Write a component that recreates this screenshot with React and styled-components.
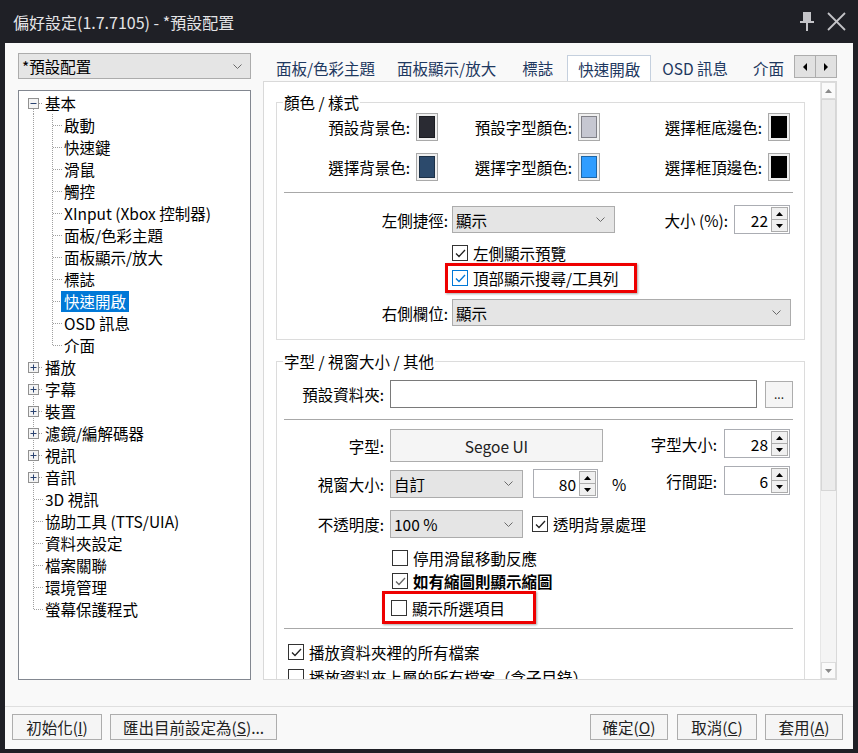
import React from 'react';
import styled, { createGlobalStyle } from 'styled-components';

const FONT = `"Noto Sans CJK TC", "Noto Sans", sans-serif`;

const GlobalStyle = createGlobalStyle`
  html, body { margin: 0; padding: 0; background: #1f2026; }
  body { font-family: ${FONT}; font-size: 15.5px; color: #000; }
  * { box-sizing: border-box; }
`;

const Window = styled.div`
  width: 858px; height: 753px; background: #1f2026;
  display: flex; flex-direction: column; overflow: hidden;
`;
const TitleBar = styled.div`
  height: 43px; flex: none; display: flex; align-items: center;
  padding: 0 12px 0 13px; color: #e4e4e6; font-size: 16px; line-height: 20px;
`;
const Title = styled.div`flex: 1;`;
const TitleIcons = styled.div`display: flex; align-items: center; gap: 12px;`;

const Client = styled.div`
  flex: 1; margin: 0 5px 4px; background: #f9f9f9;
  display: flex; flex-direction: column;
`;
const Main = styled.div`
  height: 663px; flex: none; display: flex; padding: 10px 0 26px 13px;
`;
const LeftCol = styled.div`
  width: 233px; flex: none; display: flex; flex-direction: column; gap: 11px;
`;
const Combo = styled.div`
  height: 26px; flex: none; background: #e5e5e5; border: 1px solid #acacac;
  display: flex; align-items: center; justify-content: space-between;
  padding: 0 8px 0 3px; line-height: 22px;
`;
const Tree = styled.div`
  flex: 1; background: #fff; border: 1px solid #828790; padding: 1px 0 0 4px;
  display: flex; flex-direction: column;
`;
const TreeRow = styled.div`
  height: 22px; display: flex; align-items: center; flex: none;
`;
const TreeText = styled.span`
  margin-left: -1px; padding: 0 3px; line-height: 21px; white-space: nowrap;
  background: ${p => (p.$sel ? '#0078d7' : 'transparent')};
  color: ${p => (p.$sel ? '#fff' : '#000')};
`;

const RightCol = styled.div`
  width: 574px; margin-left: 12px; flex: none; display: flex; flex-direction: column;
`;
const TabRow = styled.div`
  height: 28px; flex: none; display: flex; align-items: flex-end;
`;
const Tabs = styled.div`
  flex: 1; display: flex; align-items: flex-end; overflow: hidden; padding-left: 2px; height: 28px;
`;
const Tab = styled.div`
  height: 27px; padding: 0 10px; line-height: 26px; white-space: nowrap; flex: none;
  color: #1e3860; font-size: 15.5px;
  margin-right: ${p => p.$mr || 0}px;
  background: ${p => (p.$active ? '#fff' : 'transparent')};
  border: 1px solid ${p => (p.$active ? '#c5d0de' : 'transparent')};
  border-bottom: none;
  margin-bottom: ${p => (p.$active ? '-1px' : '0')};
  position: relative; z-index: ${p => (p.$active ? 2 : 0)};
`;
const TabArrows = styled.div`
  display: flex; flex: none; align-self: flex-start; margin-top: 2px;
`;
const ArrowBtn = styled.div`
  width: 22px; height: 23px; background: #e1e1e1; border: 1px solid #adadad;
  display: flex; align-items: center; justify-content: center;
  & + & { margin-left: -1px; }
`;
const Panel = styled.div`
  flex: 1; background: #fff; border: 1px solid #d9d9d9; display: flex; min-height: 0;
  position: relative; z-index: 1;
`;
const ScrollContent = styled.div`
  flex: 1; overflow: hidden; padding: 10px 15px 0 12px;
`;
const ScrollBar = styled.div`
  width: 16px; flex: none; background: #f4f4f4; border-left: 1px solid #e6e6e6;
  display: flex; flex-direction: column;
`;
const ScrollBtn = styled.div`
  height: 17px; flex: none; background: #fafafa; border: 1px solid #dcdcdc;
  display: flex; align-items: center; justify-content: center;
`;
const Thumb = styled.div`
  height: 392px; flex: none; background: #ececec; border: 1px solid #d6d6d6;
`;
const Track = styled.div`flex: 1;`;

const Group = styled.fieldset`
  margin: ${p => p.$mt || 0}px 0 0; padding: 0 0 13px; border: 1px solid #dcdcdc; min-width: 0;
`;
const Legend = styled.legend`
  margin-left: 6px; padding: 0 1px; line-height: 20px; font-size: 15.5px;
`;
const ColorGrid = styled.div`
  display: grid; grid-template-columns: 161px 162px 190px; row-gap: 12px; margin-top: 1px;
`;
const ColorCell = styled.div`
  display: flex; align-items: center; justify-content: flex-end; gap: 6px; line-height: 20px;
`;
const Swatch = styled.span`
  width: 22px; height: 28px; flex: none; padding: 2px; background: #f0f0f0;
  border: 1px solid #a9a9a9; display: flex;
  & > span { flex: 1; background: ${p => p.$c}; border: 1px solid rgba(0,0,0,0.35); }
`;
const Sep = styled.div`
  height: 1px; background: #a8a8a8; margin: ${p => p.$mt || 0}px 11px 0 7px;
`;
const Row = styled.div`
  display: flex; align-items: ${p => p.$top ? 'flex-start' : 'center'}; margin-top: ${p => p.$mt || 0}px;
  padding-left: ${p => p.$pl || 0}px; padding-right: ${p => p.$pr || 0}px;
  line-height: 20px;
`;
const Label = styled.span`
  flex: none; white-space: nowrap; text-align: right;
  width: ${p => (p.$w ? `${p.$w}px` : 'auto')};
`;
const Spacer = styled.div`flex: 1;`;
const Select = styled.div`
  flex: none; width: ${p => p.$w}px; height: ${p => p.$h || 27}px; margin-left: ${p => p.$ml || 0}px;
  background: #e5e5e5; border: 1px solid #acacac; display: flex; align-items: center;
  justify-content: space-between; padding: 0 9px 0 3px; white-space: nowrap;
`;
const SpinBox = styled.div`
  flex: none; width: ${p => p.$w}px; height: 29px; margin-left: ${p => p.$ml || 0}px;
  background: #fff; border: 1px solid #abadb3; display: flex;
`;
const SpinVal = styled.div`
  flex: 1; text-align: right; padding-right: 3px; display: flex; align-items: center; justify-content: flex-end;
`;
const SpinBtns = styled.div`
  width: 18px; flex: none; display: flex; flex-direction: column; padding: 1px 1px 1px 0;
`;
const SpinBtn = styled.div`
  flex: 1; background: #f0f0f0; border: 1px solid #acacac; display: flex; align-items: center; justify-content: center;
  & + & { margin-top: -1px; }
`;
const TextInput = styled.div`
  flex: none; width: ${p => p.$w}px; height: 28px; margin-left: ${p => p.$ml || 0}px;
  background: #fff; border: 1px solid #7a7a7a;
`;
const PushBtn = styled.div`
  flex: none; width: ${p => p.$w}px; height: ${p => p.$h || 26}px; margin-left: ${p => p.$ml || 0}px;
  background: #f5f5f5; border: 1px solid #adadad; display: flex; align-items: center; justify-content: center;
  color: #222; white-space: nowrap; font-size: ${p => p.$fs || 15.5}px;
`;
const CheckItem = styled.div`
  display: flex; align-items: center; gap: 5px; height: 22px; flex: none;
  margin-left: ${p => p.$ml || 0}px; margin-top: ${p => p.$mt || 0}px;
  padding-left: ${p => p.$pl || 0}px; white-space: nowrap;
  font-weight: ${p => (p.$bold ? 700 : 400)}; line-height: 20px;
`;
const Box = styled.span`
  width: 16px; height: 16px; flex: none; background: #fff;
  border: 1px solid ${p => (p.$focus ? '#0078d7' : '#333')};
  display: inline-flex; align-items: center; justify-content: center;
`;
const RedWrap = styled.div`
  width: ${p => p.$w}px; height: ${p => p.$h}px; margin-left: ${p => p.$ml}px; margin-top: -1px;
  border: 3px solid #ee0000; padding-left: ${p => p.$pl || 4}px; display: flex; align-items: center;
  box-shadow: 1px 1px 2px rgba(0,0,0,0.35);
`;
const Stack = styled.div`
  display: flex; flex-direction: column; align-items: ${p => p.$align || 'stretch'};
`;
const Percent = styled.span`margin-left: 14px;`;

const Footer = styled.div`
  flex: 1; border-top: 1px solid #dfdfdf; display: flex; align-items: flex-start;
  padding: 7px 10px 0 7px; gap: 8px;
`;

const Chevron = () => (
  <svg width="9" height="5" viewBox="0 0 9 5"><polyline points="0.5,0.5 4.5,4.5 8.5,0.5" fill="none" stroke="#6a6a6a" strokeWidth="1" /></svg>
);
const TriUp = () => (<svg width="7" height="4" viewBox="0 0 7 4"><polygon points="0,4 3.5,0 7,4" fill="#000" /></svg>);
const TriDown = () => (<svg width="7" height="4" viewBox="0 0 7 4"><polygon points="0,0 3.5,4 7,0" fill="#000" /></svg>);

function Check({ checked, focus, grey }) {
  const c = focus ? '#0078d7' : grey ? '#666' : '#222';
  return (
    <Box $focus={focus}>
      {checked && (
        <svg width="11" height="9" viewBox="0 0 11 9">
          <polyline points="1,4.5 4,7.5 10,1" fill="none" stroke={c} strokeWidth="1.3" />
        </svg>
      )}
    </Box>
  );
}

function Spin({ w, v, ml }) {
  return (
    <SpinBox $w={w} $ml={ml}>
      <SpinVal>{v}</SpinVal>
      <SpinBtns>
        <SpinBtn><TriUp /></SpinBtn>
        <SpinBtn><TriDown /></SpinBtn>
      </SpinBtns>
    </SpinBox>
  );
}

function Sel({ w, h, ml, children }) {
  return <Select $w={w} $h={h} $ml={ml}><span>{children}</span><Chevron /></Select>;
}

const DOT = { stroke: '#a0a0a0', strokeWidth: 1, strokeDasharray: '1 1', shapeRendering: 'crispEdges' };

function RootCell({ kind }) {
  const hasBox = kind === 'first' || kind === 'plus';
  return (
    <svg width="20" height="22" viewBox="0 0 20 22" style={{ flex: 'none' }}>
      {kind === 'first' && <line x1="10.5" y1="17" x2="10.5" y2="22" {...DOT} />}
      {(kind === 'plus' || kind === 'tee' || kind === 'pass') && <line x1="10.5" y1="0" x2="10.5" y2="22" {...DOT} />}
      {kind === 'corner' && <line x1="10.5" y1="0" x2="10.5" y2="12" {...DOT} />}
      {hasBox && <line x1="16" y1="11.5" x2="20" y2="11.5" {...DOT} />}
      {(kind === 'tee' || kind === 'corner') && <line x1="11" y1="11.5" x2="20" y2="11.5" {...DOT} />}
      {hasBox && (
        <g>
          <rect x="5.5" y="6.5" width="10" height="10" fill="#f4f4f4" stroke="#919191" />
          <line x1="7.5" y1="11.5" x2="13.5" y2="11.5" stroke="#2a4370" />
          {kind === 'plus' && <line x1="10.5" y1="8.5" x2="10.5" y2="14.5" stroke="#2a4370" />}
        </g>
      )}
    </svg>
  );
}
function ChildCell({ last }) {
  return (
    <svg width="19" height="22" viewBox="0 0 19 22" style={{ flex: 'none' }}>
      <line x1="9.5" y1="0" x2="9.5" y2={last ? 12 : 22} {...DOT} />
      <line x1="10" y1="11.5" x2="19" y2="11.5" {...DOT} />
    </svg>
  );
}

const children = ['啟動', '快速鍵', '滑鼠', '觸控', 'XInput (Xbox 控制器)', '面板/色彩主題', '面板顯示/放大', '標誌', '快速開啟', 'OSD 訊息', '介面'];
const roots = [
  ['播放', 'plus'], ['字幕', 'plus'], ['裝置', 'plus'], ['濾鏡/編解碼器', 'plus'], ['視訊', 'plus'], ['音訊', 'plus'],
  ['3D 視訊', 'tee'], ['協助工具 (TTS/UIA)', 'tee'], ['資料夾設定', 'tee'], ['檔案關聯', 'tee'], ['環境管理', 'tee'], ['螢幕保護程式', 'corner'],
];

export default function App() {
  return (
    <>
      <GlobalStyle />
      <Window>
        <TitleBar>
          <Title>偏好設定(1.7.7105) - *預設配置</Title>
          <TitleIcons>
            <svg width="16" height="19" viewBox="0 0 16 19">
              <rect x="4" y="0" width="8" height="9" fill="#c4c4c8" />
              <rect x="1" y="9" width="14" height="2" fill="#c4c4c8" />
              <rect x="7" y="11" width="2" height="8" fill="#c4c4c8" />
            </svg>
            <svg width="19" height="19" viewBox="0 0 19 19">
              <line x1="1" y1="1" x2="18" y2="18" stroke="#c4c4c8" strokeWidth="1.8" />
              <line x1="18" y1="1" x2="1" y2="18" stroke="#c4c4c8" strokeWidth="1.8" />
            </svg>
          </TitleIcons>
        </TitleBar>
        <Client>
          <Main>
            <LeftCol>
              <Combo><span>*預設配置</span><Chevron /></Combo>
              <Tree>
                <TreeRow><RootCell kind="first" /><TreeText>基本</TreeText></TreeRow>
                {children.map((c, i) => (
                  <TreeRow key={c}>
                    <RootCell kind="pass" />
                    <ChildCell last={i === children.length - 1} />
                    <TreeText $sel={c === '快速開啟'}>{c}</TreeText>
                  </TreeRow>
                ))}
                {roots.map(([t, k]) => (
                  <TreeRow key={t}><RootCell kind={k} /><TreeText>{t}</TreeText></TreeRow>
                ))}
              </Tree>
            </LeftCol>
            <RightCol>
              <TabRow>
                <Tabs>
                  <Tab>面板/色彩主題</Tab>
                  <Tab $mr={4}>面板顯示/放大</Tab>
                  <Tab $mr={3}>標誌</Tab>
                  <Tab $active>快速開啟</Tab>
                  <Tab $mr={3}>OSD 訊息</Tab>
                  <Tab>介面</Tab>
                </Tabs>
                <TabArrows>
                  <ArrowBtn><svg width="4" height="8" viewBox="0 0 4 8"><polygon points="4,0 0,4 4,8" fill="#000" /></svg></ArrowBtn>
                  <ArrowBtn><svg width="4" height="8" viewBox="0 0 4 8"><polygon points="0,0 4,4 0,8" fill="#000" /></svg></ArrowBtn>
                </TabArrows>
              </TabRow>
              <Panel>
                <ScrollContent>
                  <Group>
                    <Legend>顏色 / 樣式</Legend>
                    <ColorGrid>
                      <ColorCell>預設背景色:<Swatch $c="#2a2b33"><span /></Swatch></ColorCell>
                      <ColorCell>預設字型顏色:<Swatch $c="#c6c7d1"><span /></Swatch></ColorCell>
                      <ColorCell>選擇框底邊色:<Swatch $c="#000"><span /></Swatch></ColorCell>
                      <ColorCell>選擇背景色:<Swatch $c="#2c4a6c"><span /></Swatch></ColorCell>
                      <ColorCell>選擇字型顏色:<Swatch $c="#2f9dff"><span /></Swatch></ColorCell>
                      <ColorCell>選擇框頂邊色:<Swatch $c="#000"><span /></Swatch></ColorCell>
                    </ColorGrid>
                    <Sep $mt={11} />
                    <Row $mt={12} $pr={14}>
                      <Label $w={171}>左側捷徑:</Label>
                      <Sel w={163} ml={4}>顯示</Sel>
                      <Spacer />
                      <Label>大小 (%):</Label>
                      <Spin w={56} v="22" ml={6} />
                    </Row>
                    <CheckItem $pl={175} $mt={8}><Check checked />左側顯示預覽</CheckItem>
                    <RedWrap $w={192} $h={30} $ml={168} $pl={4}>
                      <CheckItem><Check checked focus />頂部顯示搜尋/工具列</CheckItem>
                    </RedWrap>
                    <Row $mt={6} $pr={13}>
                      <Label $w={171}>右側欄位:</Label>
                      <Sel w={339} ml={4}>顯示</Sel>
                    </Row>
                  </Group>
                  <Group $mt={11}>
                    <Legend>字型 / 視窗大小 / 其他</Legend>
                    <Row $mt={9} $pr={11}>
                      <Label $w={107}>預設資料夾:</Label>
                      <TextInput $w={367} $ml={6} />
                      <PushBtn $w={28} $h={27} $ml={8} $fs={12}>...</PushBtn>
                    </Row>
                    <Sep $mt={11} />
                    <Row $mt={9} $pr={14} $top>
                      <Stack>
                        <Row>
                          <Label $w={107}>字型:</Label>
                          <PushBtn $w={213} $h={33} $ml={6}>Segoe UI</PushBtn>
                        </Row>
                        <Row $mt={7}>
                          <Label $w={107}>視窗大小:</Label>
                          <Sel w={133} h={28} ml={6}>自訂</Sel>
                          <Spin w={65} v="80" ml={10} />
                          <Percent>%</Percent>
                        </Row>
                        <Row $mt={12}>
                          <Label $w={107}>不透明度:</Label>
                          <Sel w={133} h={28} ml={6}>100 %</Sel>
                          <CheckItem $ml={9}><Check checked />透明背景處理</CheckItem>
                        </Row>
                      </Stack>
                      <Spacer />
                      <Stack $align="flex-end">
                        <Row>
                          <Label>字型大小:</Label>
                          <Spin w={66} v="28" ml={7} />
                        </Row>
                        <Row $mt={8}>
                          <Label>行間距:</Label>
                          <Spin w={66} v="6" ml={7} />
                        </Row>
                      </Stack>
                    </Row>
                    <CheckItem $pl={115} $mt={9}><Check />停用滑鼠移動反應</CheckItem>
                    <CheckItem $pl={115} $mt={1} $bold><Check checked grey />如有縮圖則顯示縮圖</CheckItem>
                    <RedWrap $w={154} $h={33} $ml={105} $pl={6}>
                      <CheckItem><Check />顯示所選項目</CheckItem>
                    </RedWrap>
                    <Sep $mt={4} />
                    <CheckItem $pl={11} $mt={12}><Check checked />播放資料夾裡的所有檔案</CheckItem>
                    <CheckItem $pl={11} $mt={3}><Check />播放資料夾上層的所有檔案（含子目錄）</CheckItem>
                  </Group>
                </ScrollContent>
                <ScrollBar>
                  <ScrollBtn><svg width="7" height="4" viewBox="0 0 7 4"><polygon points="0,4 3.5,0 7,4" fill="#8a8a8a" /></svg></ScrollBtn>
                  <Thumb />
                  <Track />
                  <ScrollBtn><svg width="7" height="4" viewBox="0 0 7 4"><polygon points="0,0 3.5,4 7,0" fill="#8a8a8a" /></svg></ScrollBtn>
                </ScrollBar>
              </Panel>
            </RightCol>
          </Main>
          <Footer>
            <PushBtn $w={90}>初始化(<u>I</u>)</PushBtn>
            <PushBtn $w={167}>匯出目前設定為(<u>S</u>)...</PushBtn>
            <Spacer />
            <PushBtn $w={78}>確定(<u>O</u>)</PushBtn>
            <PushBtn $w={80} $ml={1}>取消(<u>C</u>)</PushBtn>
            <PushBtn $w={78}>套用(<u>A</u>)</PushBtn>
          </Footer>
        </Client>
      </Window>
    </>
  );
}
